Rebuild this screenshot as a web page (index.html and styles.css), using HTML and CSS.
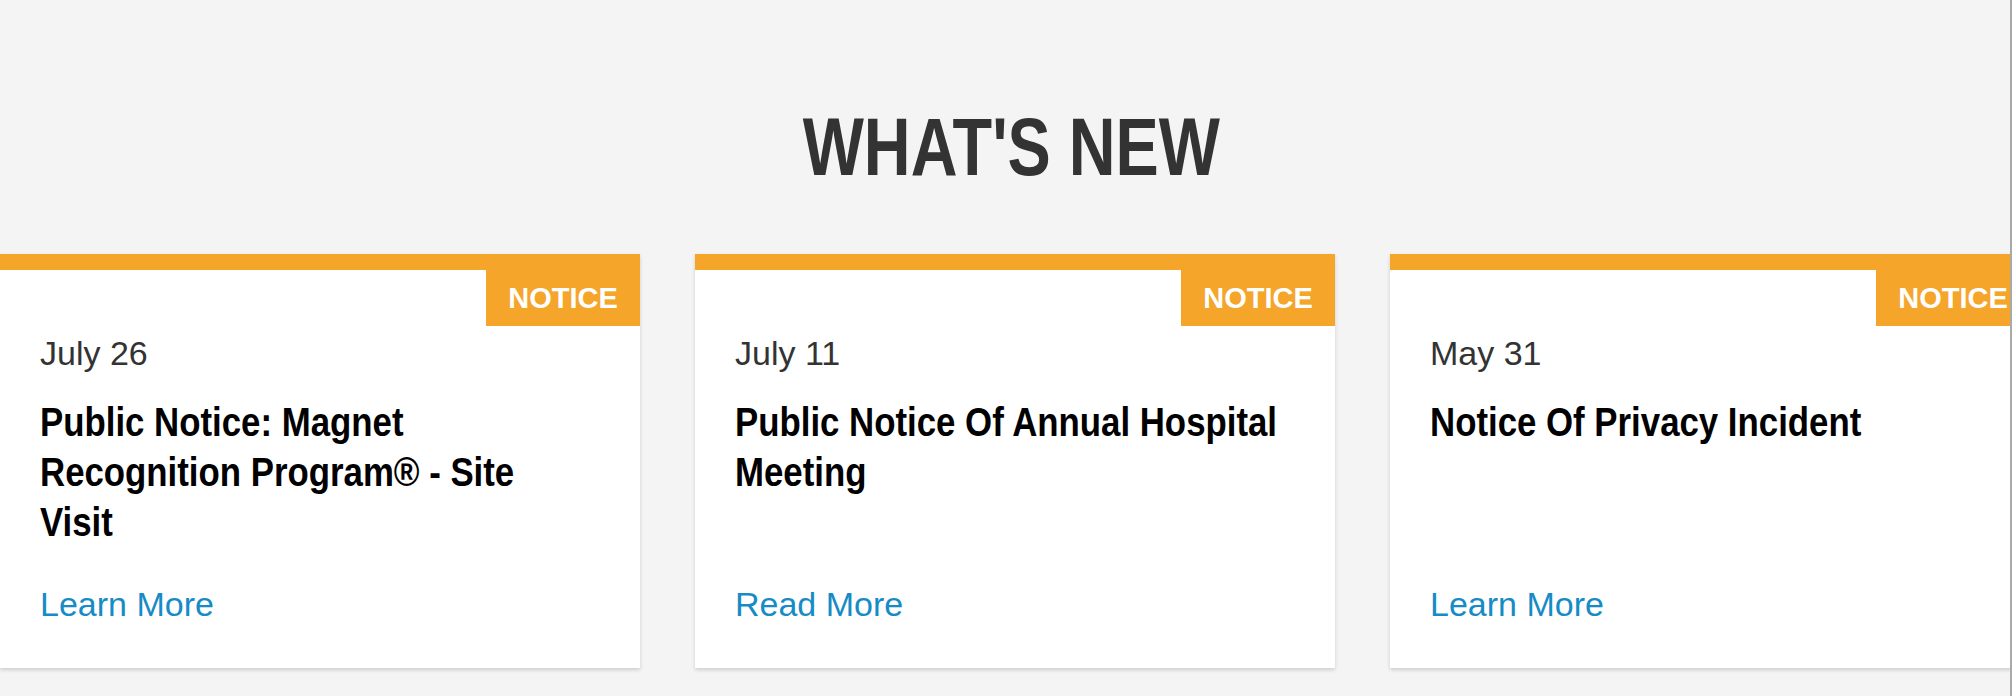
FILE: index.html
```html
<!DOCTYPE html>
<html lang="en">
<head>
    <meta charset="UTF-8">
    <meta name="viewport" content="width=device-width, initial-scale=1.0">
    <title>What's New</title>
    <link rel="stylesheet" href="styles.css">
</head>
<body>
    <div class="page">
        <section class="news">
            <h2 class="news-title">WHAT'S NEW</h2>
            <div class="cards">
                <div class="card">
                    <span class="badge">NOTICE</span>
                    <p class="date">July 26</p>
                    <h3 class="card-title">Public Notice: Magnet Recognition Program® - Site Visit</h3>
                    <a class="more" href="#">Learn More</a>
                </div>
                <div class="card">
                    <span class="badge">NOTICE</span>
                    <p class="date">July 11</p>
                    <h3 class="card-title">Public Notice Of Annual Hospital Meeting</h3>
                    <a class="more" href="#">Read More</a>
                </div>
                <div class="card">
                    <span class="badge">NOTICE</span>
                    <p class="date">May 31</p>
                    <h3 class="card-title">Notice Of Privacy Incident</h3>
                    <a class="more" href="#">Learn More</a>
                </div>
            </div>
        </section>
    </div>
</body>
</html>
```

FILE: styles.css
```css
html, body {
    margin: 0;
    padding: 0;
    background: #f4f4f4;
}

body {
    font-family: 'Liberation Sans', Arial, sans-serif;
}

.page {
    height: 696px;
    overflow: hidden;
    border-right: 2px solid #a9a9a9;
    box-sizing: border-box;
}

.news {
    padding-top: 106px;
}

/* no condensed face installed, so the bold face is squeezed */
.news-title {
    margin: 0 0 66px;
    padding-left: 16px;
    font-size: 82px;
    line-height: 82px;
    font-weight: bold;
    color: #333333;
    text-align: center;
    transform: scaleX(0.79);
}

.cards {
    display: flex;
    gap: 55px;
}

.card {
    flex: 0 0 640px;
    width: 640px;
    min-width: 0;
    box-sizing: border-box;
    position: relative;
    display: flex;
    flex-direction: column;
    align-items: flex-start;
    padding: 63px 40px 44px;
    background: #ffffff;
    border-top: 16px solid #f5a52a;
    box-shadow: 0 2px 4px rgba(0, 0, 0, 0.16);
}

.badge {
    position: absolute;
    top: 0;
    right: 0;
    width: 154px;
    height: 56px;
    line-height: 56px;
    text-align: center;
    font-size: 29px;
    font-weight: bold;
    color: #ffffff;
    background: #f5a52a;
}

.date {
    margin: 0 0 24px;
    font-size: 34px;
    line-height: 40px;
    color: #333333;
}

.card-title {
    width: 632px;
    flex-shrink: 0;
    margin: 0 0 38px;
    font-size: 40px;
    line-height: 50px;
    font-weight: bold;
    color: #000000;
    transform: scaleX(0.87);
    transform-origin: left top;
}

.more {
    margin-top: auto;
    font-size: 34px;
    line-height: 39px;
    color: #168bc5;
    text-decoration: none;
}
```
